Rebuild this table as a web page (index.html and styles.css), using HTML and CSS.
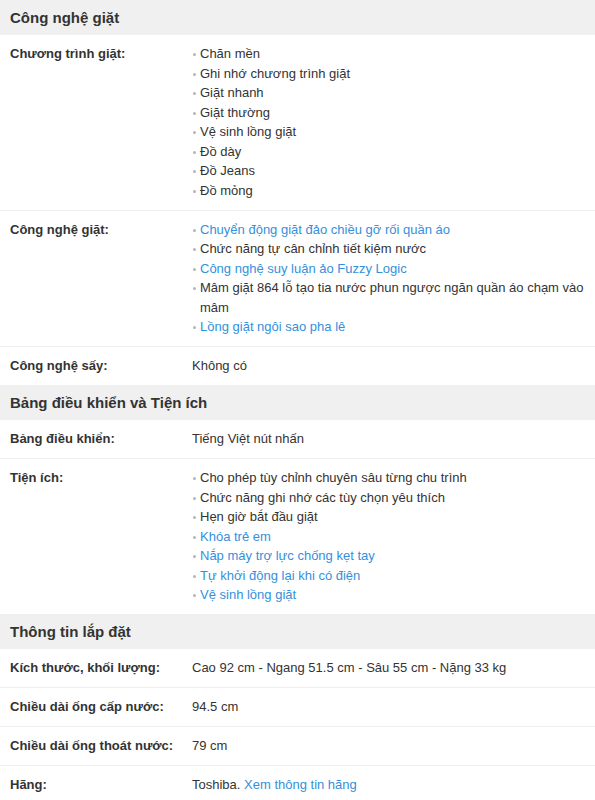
FILE: index.html
```html
<!DOCTYPE html>
<html lang="vi">
<head>
    <meta charset="UTF-8">
    <meta name="viewport" content="width=device-width, initial-scale=1.0">
    <title>Thông số kỹ thuật</title>
    <link rel="stylesheet" href="styles.css">
</head>
<body>
    <div class="specs">
        <h3 class="group">Công nghệ giặt</h3>
        <div class="row">
            <div class="label">Chương trình giặt:</div>
            <ul class="value">
                <li>Chăn mền</li>
                <li>Ghi nhớ chương trình giặt</li>
                <li>Giặt nhanh</li>
                <li>Giặt thường</li>
                <li>Vệ sinh lồng giặt</li>
                <li>Đồ dày</li>
                <li>Đồ Jeans</li>
                <li>Đồ mỏng</li>
            </ul>
        </div>
        <div class="row">
            <div class="label">Công nghệ giặt:</div>
            <ul class="value">
                <li><a href="#">Chuyển động giặt đảo chiều gỡ rối quần áo</a></li>
                <li>Chức năng tự cân chỉnh tiết kiệm nước</li>
                <li><a href="#">Công nghệ suy luận ảo Fuzzy Logic</a></li>
                <li>Mâm giặt 864 lỗ tạo tia nước phun ngược ngăn quần áo chạm vào mâm</li>
                <li><a href="#">Lồng giặt ngôi sao pha lê</a></li>
            </ul>
        </div>
        <div class="row">
            <div class="label">Công nghệ sấy:</div>
            <div class="value">Không có</div>
        </div>

        <h3 class="group">Bảng điều khiển và Tiện ích</h3>
        <div class="row">
            <div class="label">Bảng điều khiển:</div>
            <div class="value">Tiếng Việt nút nhấn</div>
        </div>
        <div class="row">
            <div class="label">Tiện ích:</div>
            <ul class="value">
                <li>Cho phép tùy chỉnh chuyên sâu từng chu trình</li>
                <li>Chức năng ghi nhớ các tùy chọn yêu thích</li>
                <li>Hẹn giờ bắt đầu giặt</li>
                <li><a href="#">Khóa trẻ em</a></li>
                <li><a href="#">Nắp máy trợ lực chống kẹt tay</a></li>
                <li><a href="#">Tự khởi động lại khi có điện</a></li>
                <li><a href="#">Vệ sinh lồng giặt</a></li>
            </ul>
        </div>

        <h3 class="group">Thông tin lắp đặt</h3>
        <div class="row">
            <div class="label">Kích thước, khối lượng:</div>
            <div class="value">Cao 92 cm - Ngang 51.5 cm - Sâu 55 cm - Nặng 33 kg</div>
        </div>
        <div class="row">
            <div class="label">Chiều dài ống cấp nước:</div>
            <div class="value">94.5 cm</div>
        </div>
        <div class="row">
            <div class="label">Chiều dài ống thoát nước:</div>
            <div class="value">79 cm</div>
        </div>
        <div class="row">
            <div class="label">Hãng:</div>
            <div class="value">Toshiba. <a href="#">Xem thông tin hãng</a></div>
        </div>
    </div>
</body>
</html>
```

FILE: styles.css
```css
body {
    margin: 0;
    padding: 0;
    background: #fff;
    font-family: "Liberation Sans", Arial, sans-serif;
    font-size: 13px;
    color: #333;
}

.specs {
    width: 595px;
}

.group {
    margin: 0;
    padding: 0 10px;
    height: 35px;
    line-height: 35px;
    background: #f0f0f0;
    font-size: 15px;
    font-weight: bold;
    color: #333;
}

.row {
    display: flex;
    padding: 9px 0 9.5px;
    line-height: 19.5px;
    border-top: 1px solid #eee;
}

.group + .row {
    border-top: none;
}

.label {
    width: 182px;
    padding-left: 10px;
    font-weight: bold;
    flex-shrink: 0;
}

.value {
    flex: 1;
    margin: 0;
    padding: 0 10px 0 0;
    list-style: none;
}

.value li {
    position: relative;
    padding-left: 8px;
}

.value li::before {
    content: "";
    position: absolute;
    left: 1px;
    top: 9px;
    width: 3px;
    height: 3px;
    border-radius: 50%;
    background: #b5b5b5;
}

a {
    color: #3490dc;
    text-decoration: none;
}
```
